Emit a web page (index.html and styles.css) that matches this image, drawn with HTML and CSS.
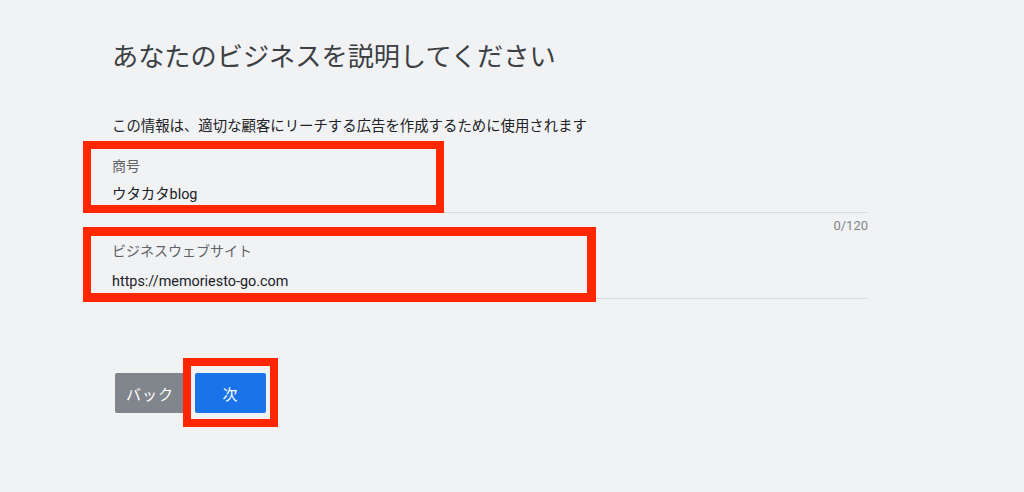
FILE: index.html
```html
<!doctype html>
<html lang="ja">
    <head>
        <meta charset="UTF-8" />
        <meta name="viewport" content="width=device-width, initial-scale=1.0" />
        <title>ビジネスの説明</title>
        <link rel="stylesheet" href="styles.css">
    </head>
    <body>
        <div class="page">
            <h1>あなたのビジネスを説明してください</h1>

            <p class="intro">この情報は、適切な顧客にリーチする広告を作成するために使用されます</p>

            <div class="field field-name">
                <label for="businessName">商号</label>
                <div class="value" id="businessName">ウタカタblog</div>
            </div>
            <div class="counter">0/120</div>

            <div class="field field-site">
                <label for="website">ビジネスウェブサイト</label>
                <div class="value" id="website">https://memoriesto-go.com</div>
            </div>

            <div class="actions">
                <button type="button" class="btn btn-back">バック</button>
                <button type="button" class="btn btn-next">次</button>
            </div>

            <!-- annotation boxes -->
            <div class="mark mark-name"></div>
            <div class="mark mark-site"></div>
            <div class="mark mark-next"></div>
        </div>
    </body>
</html>
```

FILE: styles.css
```css
* {
    box-sizing: border-box;
    margin: 0;
    padding: 0;
}

body {
    font-family: Roboto, "Noto Sans CJK JP", sans-serif;
    background-color: #f1f2f4;
    color: #3c4043;
    width: 1024px;
    height: 492px;
    overflow: hidden;
}

.page {
    position: relative;
    padding: 39px 0 0 112px;
    width: 868px;
    height: 492px;
}

h1 {
    font-size: 26.2px;
    line-height: 36px;
    font-weight: 400;
    color: #3c4043;
}

.intro {
    margin-top: 42px;
    font-size: 14.4px;
    line-height: 20px;
    color: #202124;
}

.field {
    border-bottom: 1px solid #dadce0;
}

.field label {
    display: block;
    font-size: 14px;
    line-height: 20px;
    color: #5f6368;
}

.value {
    font-size: 14.4px;
    line-height: 22px;
    color: #202124;
}

.field-name {
    margin-top: 19px;
    padding-bottom: 6px;
}

.field-name .value {
    margin-top: 8px;
}

.counter {
    margin-top: 5px;
    font-size: 13px;
    line-height: 16px;
    text-align: right;
    color: #80868b;
}

.field-site {
    margin-top: 7px;
    padding-bottom: 5px;
}

.field-site .value {
    margin-top: 10px;
}

.actions {
    display: flex;
    gap: 10px;
    margin-top: 74px;
    margin-left: 3px;
}

.btn {
    height: 40px;
    border: none;
    border-radius: 2px;
    color: #fff;
    font-family: Roboto, "Noto Sans CJK JP", sans-serif;
    font-size: 15px;
    letter-spacing: 1px;
}

.btn-back {
    width: 70px;
    background-color: #80868b;
}

.btn-next {
    width: 71px;
    background-color: #1a73e8;
}

.mark {
    position: absolute;
    border: 8px solid #ff2600;
}

.mark-name {
    left: 83px;
    top: 141px;
    width: 361px;
    height: 72px;
}

.mark-site {
    left: 83px;
    top: 227px;
    width: 513px;
    height: 75px;
    border-width: 9px 9px 9px 8px;
}

.mark-next {
    left: 183px;
    top: 358px;
    width: 95px;
    height: 69px;
}
```
